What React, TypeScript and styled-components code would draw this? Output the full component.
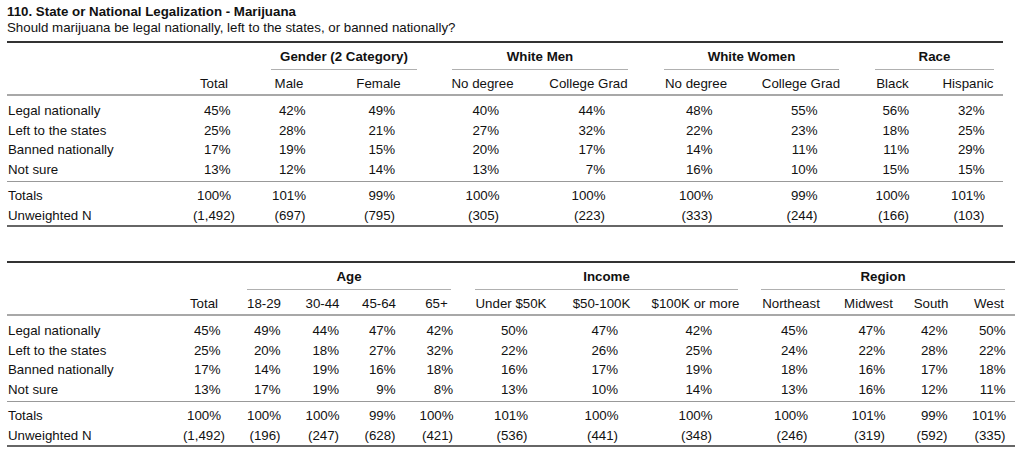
import React from 'react';
import styled, { createGlobalStyle } from 'styled-components';

const GlobalStyle = createGlobalStyle`
  html, body {
    margin: 0;
    padding: 0;
    background: #fff;
  }

  body {
    font-family: 'Liberation Sans', Arial, Helvetica, sans-serif;
    font-size: 13.3px;
    color: #111;
  }
`;

const Page = styled.div`
  padding: 4px 7px 0;
`;

const Title = styled.div`
  font-weight: 700;
  line-height: 16px;
`;

const Subtitle = styled.div`
  line-height: 16px;
`;

interface TableProps {
  readonly $width: number;
  readonly $gap: number;
}

const Table = styled.div<TableProps>`
  width: ${props => props.$width}px;
  margin-top: ${props => props.$gap}px;
  border-top: 2px solid #333;
  border-bottom: 2px solid #666;
`;

interface RowProps {
  readonly $cols: string;
}

const Row = styled.div<RowProps>`
  display: grid;
  grid-template-columns: ${props => props.$cols};
`;

const GroupRow = styled(Row)`
  padding-top: 6px;
  line-height: 16px;
`;

const HeaderRow = styled(Row)`
  padding: 6px 0 2px;
  line-height: 16px;
  border-bottom: 2px solid #a8a8a8;
`;

const Section = styled.div<{ readonly $top: number; readonly $bottom: number; readonly $rule?: boolean }>`
  padding-top: ${props => props.$top}px;
  padding-bottom: ${props => props.$bottom}px;
  border-bottom: ${props => (props.$rule ? '1px solid #999' : 'none')};
`;

const DataRow = styled(Row)`
  line-height: 19.5px;
`;

const Cell = styled.div`
  display: flex;
  justify-content: center;
  white-space: nowrap;
`;

const LabelCell = styled.div`
  padding-left: 1px;
  white-space: nowrap;
`;

const Value = styled.span`
  display: inline-block;
  min-width: 33px;
  text-align: right;
`;

interface GroupProps {
  readonly $span: number;
}

const GroupCell = styled.div<GroupProps>`
  grid-column: span ${props => props.$span};
`;

interface SpannerProps {
  readonly $ml: number;
  readonly $mr: number;
}

const Spanner = styled.div<SpannerProps>`
  margin-left: ${props => props.$ml}px;
  margin-right: ${props => props.$mr}px;
  padding-bottom: 4px;
  border-bottom: 1px solid #b0b0b0;
  text-align: center;
  font-weight: 700;
  white-space: nowrap;
`;

type Group = { label: string; span: number; ml: number; mr: number };

interface TableData {
  cols: number[];
  groups: Group[];
  headers: string[];
  rows: [string, string[]][];
  totals: [string, string[]][];
}

const pct = (list: number[]) => list.map(n => `${n}%`);

const table1: TableData = {
  cols: [170, 74, 76, 103, 105, 107, 108, 102, 81, 70],
  groups: [
    { label: 'Gender (2 Category)', span: 2, ml: 20, mr: 13 },
    { label: 'White Men', span: 2, ml: 22, mr: 14 },
    { label: 'White Women', span: 2, ml: 22, mr: 13 },
    { label: 'Race', span: 2, ml: 23, mr: 9 },
  ],
  headers: ['Total', 'Male', 'Female', 'No degree', 'College Grad', 'No degree', 'College Grad', 'Black', 'Hispanic'],
  rows: [
    ['Legal nationally', pct([45, 42, 49, 40, 44, 48, 55, 56, 32])],
    ['Left to the states', pct([25, 28, 21, 27, 32, 22, 23, 18, 25])],
    ['Banned nationally', pct([17, 19, 15, 20, 17, 14, 11, 11, 29])],
    ['Not sure', pct([13, 12, 14, 13, 7, 16, 10, 15, 15])],
  ],
  totals: [
    ['Totals', pct([100, 101, 99, 100, 100, 100, 99, 100, 101])],
    ['Unweighted N', ['(1,492)', '(697)', '(795)', '(305)', '(223)', '(333)', '(244)', '(166)', '(103)']],
  ],
};

const table2: TableData = {
  cols: [167, 60, 60, 57, 56, 59, 90, 91, 97, 94, 61, 64, 52],
  groups: [
    { label: 'Age', span: 4, ml: 13, mr: 15 },
    { label: 'Income', span: 3, ml: 9, mr: 6 },
    { label: 'Region', span: 4, ml: 17, mr: 10 },
  ],
  headers: [
    'Total',
    '18-29',
    '30-44',
    '45-64',
    '65+',
    'Under $50K',
    '$50-100K',
    '$100K or more',
    'Northeast',
    'Midwest',
    'South',
    'West',
  ],
  rows: [
    ['Legal nationally', pct([45, 49, 44, 47, 42, 50, 47, 42, 45, 47, 42, 50])],
    ['Left to the states', pct([25, 20, 18, 27, 32, 22, 26, 25, 24, 22, 28, 22])],
    ['Banned nationally', pct([17, 14, 19, 16, 18, 16, 17, 19, 18, 16, 17, 18])],
    ['Not sure', pct([13, 17, 19, 9, 8, 13, 10, 14, 13, 16, 12, 11])],
  ],
  totals: [
    ['Totals', pct([100, 100, 100, 99, 100, 101, 100, 100, 100, 101, 99, 101])],
    [
      'Unweighted N',
      ['(1,492)', '(196)', '(247)', '(628)', '(421)', '(536)', '(441)', '(348)', '(246)', '(319)', '(592)', '(335)'],
    ],
  ],
};

const Rows = ({ cols, rows }: { cols: string; rows: [string, string[]][] }) => (
  <>
    {rows.map(([label, values]) => (
      <DataRow $cols={cols} key={label}>
        <LabelCell>{label}</LabelCell>
        {values.map((v, i) => (
          <Cell key={i}>
            <Value>{v}</Value>
          </Cell>
        ))}
      </DataRow>
    ))}
  </>
);

const CrossTab = ({ data, gap }: { data: TableData; gap: number }) => {
  const cols = data.cols.map(c => `${c}px`).join(' ');
  const width = data.cols.reduce((a, b) => a + b, 0);

  return (
    <Table $width={width} $gap={gap}>
      <GroupRow $cols={cols}>
        <GroupCell $span={2} />
        {data.groups.map(g => (
          <GroupCell $span={g.span} key={g.label}>
            <Spanner $ml={g.ml} $mr={g.mr}>
              {g.label}
            </Spanner>
          </GroupCell>
        ))}
      </GroupRow>
      <HeaderRow $cols={cols}>
        <LabelCell />
        {data.headers.map((h, i) => (
          <Cell key={i}>{h}</Cell>
        ))}
      </HeaderRow>
      <Section $top={5} $bottom={2} $rule>
        <Rows cols={cols} rows={data.rows} />
      </Section>
      <Section $top={4} $bottom={0}>
        <Rows cols={cols} rows={data.totals} />
      </Section>
    </Table>
  );
};

const App = () => (
  <Page>
    <GlobalStyle />
    <Title>110. State or National Legalization - Marijuana</Title>
    <Subtitle>Should marijuana be legal nationally, left to the states, or banned nationally?</Subtitle>
    <CrossTab data={table1} gap={5} />
    <CrossTab data={table2} gap={34} />
  </Page>
);

export default App;
